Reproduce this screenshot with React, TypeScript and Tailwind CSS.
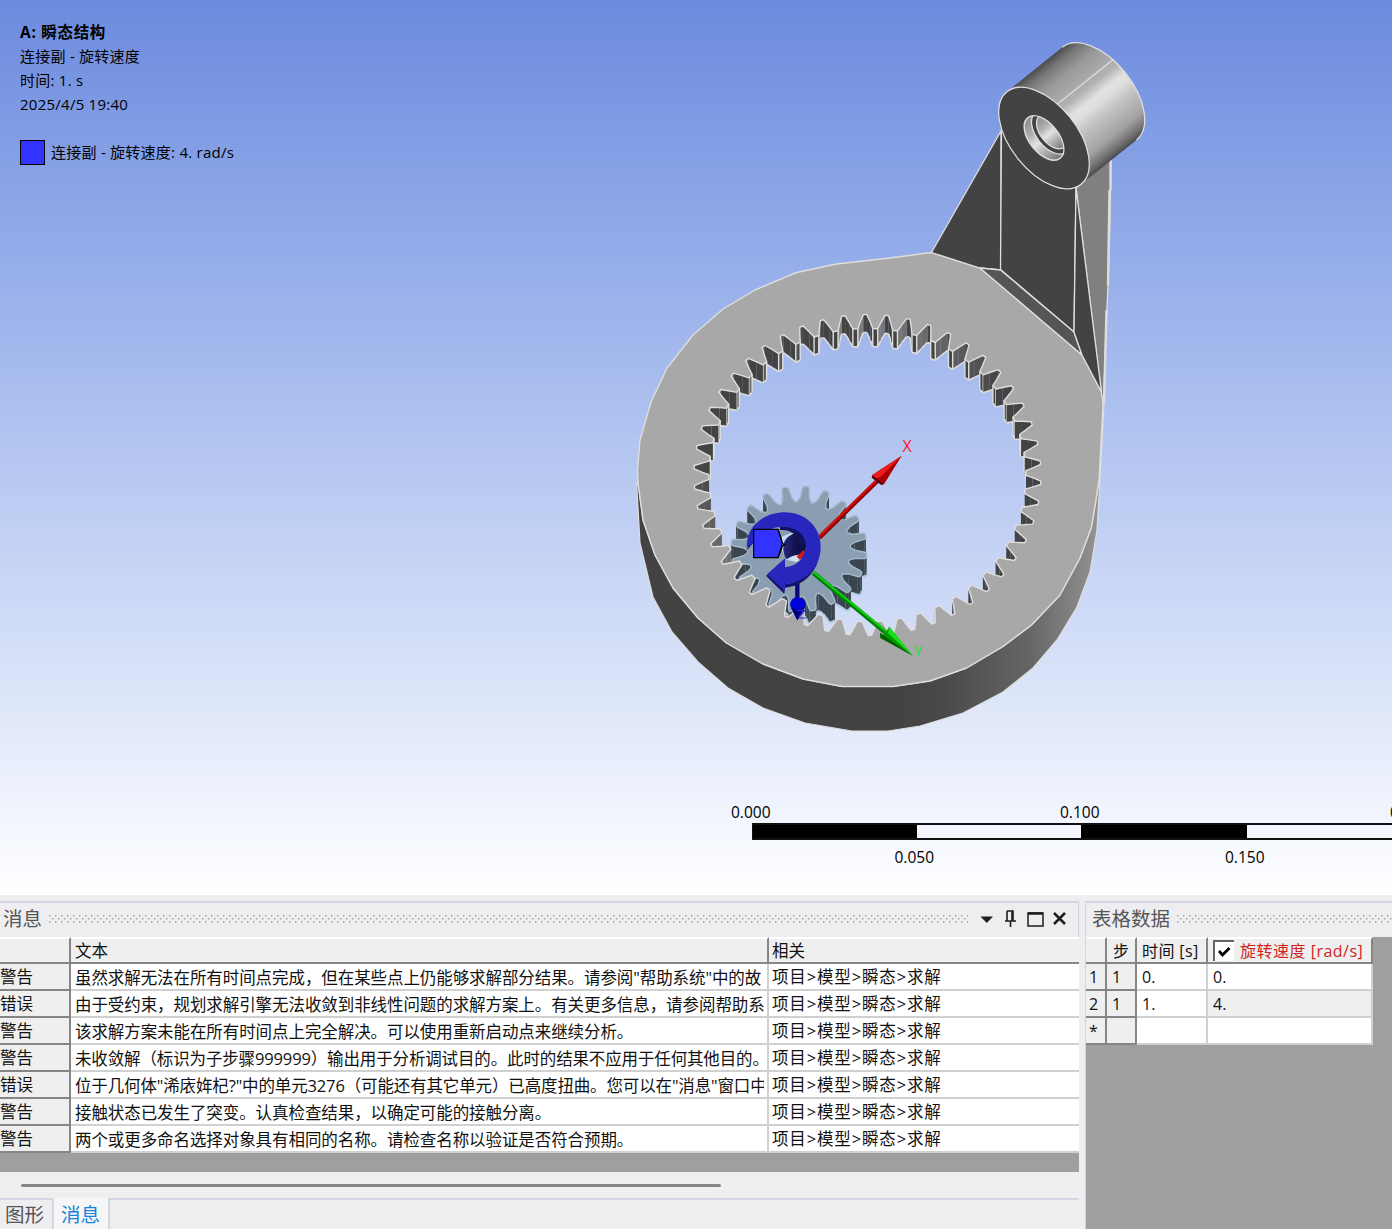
import React from "react";

type Pt = [number, number];

const UI = "font-['Open_Sans','Noto_Sans_CJK_SC',sans-serif]";

const DEPTH = 18;
const SQUASH = 0.925;

const polar = (cx: number, cy: number, r: number, deg: number): Pt => {
  const a = (deg * Math.PI) / 180;
  return [cx + r * Math.sin(a), cy - r * SQUASH * Math.cos(a)];
};

const toPath = (pts: Pt[]) =>
  "M" + pts.map((p) => p[0].toFixed(1) + " " + p[1].toFixed(1)).join("L") + "Z";

// Internal ring gear: 50 gaps, traversed clockwise.
const ringHole: Pt[] = [];
for (let k = 0; k < 50; k++) {
  const t = -0.8 + 7.2 * k;
  const add = (r: number, d: number) => ringHole.push(polar(867.5, 475, r, t + d));
  add(158.5, -2.7);
  add(165, -1.8);
  add(173.5, -0.6);
  add(173.5, 0.6);
  add(165, 1.8);
  add(158.5, 2.7);
}

// Pinion: 20 teeth, traversed clockwise.
const pinion: Pt[] = [];
for (let k = 0; k < 20; k++) {
  const t = 6 + 18 * k;
  const add = (r: number, d: number) => pinion.push(polar(799, 549, r, t + d));
  add(51.5, -7.6);
  add(56, -4.6);
  add(66, -3);
  add(68, -1.8);
  add(68, 1.8);
  add(66, 3);
  add(56, 4.6);
  add(51.5, 7.6);
}

interface Wall {
  a: Pt;
  b: Pt;
  nx: number;
  corner: boolean;
}

const walls = (pts: Pt[], hole: boolean, per: number): Wall[] => {
  const out: Wall[] = [];
  pts.forEach((a, i) => {
    const b = pts[(i + 1) % pts.length];
    const dx = b[0] - a[0];
    const dy = b[1] - a[1];
    if (hole ? dx <= 0.05 : dx >= -0.05) return;
    const len = Math.hypot(dx, dy);
    out.push({ a, b, nx: ((hole ? -1 : 1) * dy) / len, corner: i % per === per - 1 });
  });
  return out.sort((p, q) => p.a[1] + p.b[1] - q.a[1] - q.b[1]);
};

const ringWalls = walls(ringHole, true, 6);
const pinionWalls = walls(pinion, false, 8);

const FACE =
  "M931.5 252.5L980 268L1082 355L1102 393L1103 405L1099 480L1095 506L1091.5 527L1080 558L1060 595L1031.5 625L1003 646.5L966.5 668L930 681L893 686.5L842 686.5L803 679L763 664L726.5 643L698 618L673 588L655 555L643 520L638 483L637.5 470L640 440L651 402L667 368L693 335L723 309L755 290L796.5 272.5L836.5 264L890 258Z";
const RIM =
  "M637 483L637 490L640 543L653 597L672 632L698 662L728 688L763 708L805 723L852 731L888 731L920 726L963 713L1003 692L1033 668L1057 640L1077 607L1090 572L1097 530L1100 480L1104 405L1099 480L1095 506L1091.5 527L1080 558L1060 595L1031.5 625L1003 646.5L966.5 668L930 681L893 686.5L842 686.5L803 679L763 664L726.5 643L698 618L673 588L655 555L643 520L638 483Z";

const EDGE = "#dedede";

function Arm() {
  return (
    <g stroke={EDGE} strokeWidth="1.3" strokeLinejoin="round">
      <path d="M1076 188L1111 158L1110 225L1108 285L1106 330L1103.500 404L1101 390Z" fill="#808080" />
      <path d="M1110.500 160V190M1109.500 190L1108 285M1106.500 310L1104 404" stroke="#dcdcdc" strokeWidth="2.400" fill="none" />
      <path d="M931.500 252.500L1001 131L1001 270L980 268Z" fill="#434343" />
      <path d="M1001.500 128L1076 186L1075 256L1074 332L1000.500 269.500Z" fill="#434343" />
      <path d="M980 268L1000.500 270L1074 332L1082 355Z" fill="#555555" />
      <path d="M1076 188L1101.500 392L1082 355L1074 332Z" fill="#434343" />
    </g>
  );
}

function Boss() {
  return (
    <g transform="translate(1044 138) rotate(51.3)" stroke={EDGE} strokeWidth="1.3">
      <path d="M-59.300 0V-71A59.300 33.300 0 0 1 59.300 -71V0Z" fill="url(#barrel)" stroke="none" />
      <path d="M-59.300 -71A59.300 33.300 0 0 1 59.300 -71" fill="none" />
      <path d="M-18 -31V-103" fill="none" />
      <ellipse rx="59.300" ry="33.300" fill="#434343" />
      <g clipPath="url(#bore)">
        <ellipse rx="26" ry="14.700" fill="url(#boreFill)" />
        <ellipse cy="-8.500" rx="25" ry="14.200" fill="#434343" />
        <ellipse cy="-10.500" rx="20" ry="12" fill="url(#boreFill)" />
      </g>
      <ellipse rx="26" ry="14.700" fill="none" />
    </g>
  );
}

function Triad() {
  return (
    <g transform="translate(690 430) scale(0.33333)">
      <path d="M275 320L325 300L350 330L350 380L320 395L290 390L275 360Z" fill="#c3dbee" />
      <path d="M283 335C295 312 325 302 338 310C352 325 352 360 340 375C320 372 300 380 290 388C278 370 278 352 283 335Z" fill="url(#navy)" />
      <path d="M300 383Q318 373 330 378L320 395Q306 396 300 383Z" fill="#cfe0ee" />
      <path d="M325 385L345 365" stroke="#d01818" strokeWidth="14" />
      <path d="M388 323L565 150" stroke="#8c0000" strokeWidth="13" />
      <path d="M386 320L563 147" stroke="#dc1010" strokeWidth="6" />
      <path d="M635 77L547 135L560 150L582 163Z" fill="#a80000" />
      <path d="M635 77L547 135L556 147L572 140Z" fill="#f01c1c" />
      <path d="M547 135L582 163L574 165L545 143Z" fill="#5c0000" />
      <path d="M322 450V510" stroke="#0a0a78" strokeWidth="13" />
      <path d="M300 525Q303 502 322 502Q345 504 347 525L322 571Z" fill="#0000d8" />
      <path d="M302 532Q322 545 346 530L322 571Z" fill="#00007c" />
      <path d="M320 541H345M325 564H347M345 541L328 560" stroke="#2020f0" strokeWidth="3.500" fill="none" />
      <path d="M370 429L585 606" stroke="#008000" strokeWidth="14" />
      <path d="M370 426L587 603" stroke="#10d010" strokeWidth="6" />
      <path d="M668 677L598 590L590 603L570 622Z" fill="#009a00" />
      <path d="M668 677L598 590L594 610Z" fill="#18e018" />
      <path d="M570 608L668 677L571 624Z" fill="#006000" />
      <path d="M270 290C315 285 352 310 347 345L330 350C332 315 300 298 270 300Z" fill="#101060" />
      <path d="M168 363L192 337V315ZM283 492L228 437L240 430L285 470ZM285 463Q350 455 385 385L380 405Q350 466 285 473Z" fill="#14146c" />
      <path d="M170 352L172 330C180 280 230 247 285 247C345 247 392 290 392 350C392 410 350 455 285 463L284 482L231 433L285 385V412C320 408 347 385 347 345C347 310 315 292 280 290C240 290 200 315 188 342Z" fill="#2727bd" />
      <path d="M191 298H264L277 340L264 383H191Z" fill="#3333ff" stroke="#000" strokeWidth="3.500" />
      <path d="M264 298L272 320L277 340L284 344L277 348L272 365L264 383" fill="none" stroke="#000" strokeWidth="3.500" />
    </g>
  );
}

function Model() {
  return (
    <svg className="absolute inset-0" width="1392" height="895" viewBox="0 0 1392 895">
      <defs>
        <linearGradient id="barrel" gradientUnits="userSpaceOnUse" x1="-59.300" y1="0" x2="59.300" y2="0">
          <stop offset="0" stopColor="#4c4c4c" />
          <stop offset="0.08" stopColor="#777" />
          <stop offset="0.2" stopColor="#9a9a9a" />
          <stop offset="0.4" stopColor="#b2b2b2" />
          <stop offset="0.5" stopColor="#e2e2e2" />
          <stop offset="0.56" stopColor="#dedede" />
          <stop offset="0.66" stopColor="#c4c4c4" />
          <stop offset="0.85" stopColor="#a2a2a2" />
          <stop offset="0.95" stopColor="#6e6e6e" />
          <stop offset="1" stopColor="#4a4a4a" />
        </linearGradient>
        <linearGradient id="boreFill" x1="0" y1="0" x2="1" y2="0">
          <stop offset="0" stopColor="#8c8c8c" />
          <stop offset="0.3" stopColor="#b0b0b0" />
          <stop offset="0.5" stopColor="#e4e4e4" />
          <stop offset="0.7" stopColor="#b4b4b4" />
          <stop offset="1" stopColor="#777" />
        </linearGradient>
        <linearGradient id="rim" gradientUnits="userSpaceOnUse" x1="900" y1="0" x2="1100" y2="0">
          <stop offset="0" stopColor="#434343" />
          <stop offset="0.2" stopColor="#484848" />
          <stop offset="0.65" stopColor="#666" />
          <stop offset="1" stopColor="#949494" />
        </linearGradient>
        <linearGradient id="navy" x1="0" y1="0" x2="1" y2="0">
          <stop offset="0" stopColor="#2a2a80" />
          <stop offset="0.5" stopColor="#12124e" />
          <stop offset="1" stopColor="#0c0c40" />
        </linearGradient>
        <clipPath id="bore">
          <ellipse rx="26" ry="14.700" />
        </clipPath>
      </defs>
      <path d={RIM} fill="url(#rim)" stroke={EDGE} strokeWidth="1.2" strokeLinejoin="round" />
      <g>
        {ringWalls.map(({ a, b, nx, corner }, i) => {
          const s = Math.round(67 + Math.max(0, nx - 0.25) * 85);
          return (
            <g key={i}>
              <path
                d={`M${a[0]} ${a[1]}L${b[0]} ${b[1]}V${b[1] + DEPTH}L${a[0]} ${a[1] + DEPTH}Z`}
                fill={`rgb(${s},${s},${s})`}
              />
              <path d={`M${a[0]} ${a[1] + DEPTH}L${b[0]} ${b[1] + DEPTH}`} stroke={EDGE} strokeWidth="1.6" />
              {corner && (
                <path
                  d={`M${a[0]} ${a[1]}v${DEPTH}M${b[0]} ${b[1]}v${DEPTH}`}
                  stroke={EDGE}
                  strokeWidth="1.4"
                />
              )}
            </g>
          );
        })}
      </g>
      <g>
        {pinionWalls.map(({ a, b }, i) => (
          <g key={i}>
            <path
              d={`M${a[0]} ${a[1]}L${b[0]} ${b[1]}V${b[1] + DEPTH}L${a[0]} ${a[1] + DEPTH}Z`}
              fill="#39444e"
            />
            <path d={`M${a[0]} ${a[1] + DEPTH}L${b[0]} ${b[1] + DEPTH}`} stroke="#b3cee4" strokeWidth="2.200" />
          </g>
        ))}
        <path d={toPath(pinion)} fill="#8b9db0" stroke="#a3b9cc" strokeWidth="1.4" strokeLinejoin="round" />
      </g>
      <path
        d={FACE + toPath(ringHole)}
        fillRule="evenodd"
        fill="#a8a8a8"
        stroke={EDGE}
        strokeWidth="1.4"
        strokeLinejoin="round"
      />
      <Arm />
      <Boss />
      <Triad />
      <text x="902.500" y="452" fill="#ff2020" fontSize="16" fontFamily="Open Sans">X</text>
      <text x="914" y="655.500" fill="#18e818" fontSize="15" fontFamily="Open Sans">Y</text>
    </svg>
  );
}

function ScaleBar() {
  return (
    <div className="absolute left-[731px] top-[802px] w-[661px] overflow-hidden text-[15.500px] leading-5 text-black">
      <div className="flex whitespace-nowrap">
        <span className="w-[329px] shrink-0">0.000</span>
        <span className="w-[330px] shrink-0">0.100</span>
        <span className="shrink-0">0.200</span>
      </div>
      <div className="ml-[21px] mt-px flex h-[17px] border-y-2 border-l border-[#111]">
        <div className="w-[164px] shrink-0 bg-black" />
        <div className="w-[164px] shrink-0" />
        <div className="w-[166px] shrink-0 bg-black" />
        <div className="grow" />
      </div>
      <div className="mt-[7px] flex whitespace-nowrap pl-[163.500px]">
        <span className="w-[330.500px] shrink-0">0.050</span>
        <span>0.150</span>
      </div>
    </div>
  );
}

function Viewport() {
  return (
    <section className="relative h-[895px] shrink-0 overflow-hidden bg-linear-to-b from-[#6c8bde] to-white">
      <Model />
      <div className="relative flex flex-col pl-5 pt-5 text-[15px] leading-6 tracking-[0.25px] text-black">
        <p className="text-[15.500px] font-bold tracking-[0.7px]">A: 瞬态结构</p>
        <p>连接副 - 旋转速度</p>
        <p>时间: 1. s</p>
        <p>2025/4/5 19:40</p>
        <div className="mt-6 flex h-6 items-center gap-[6px] whitespace-nowrap">
          <span className="size-[25px] border border-black bg-[#3333ff]" />
          <span>连接副 - 旋转速度: 4. rad/s</span>
        </div>
      </div>
      <ScaleBar />
    </section>
  );
}

function Grip() {
  return (
    <svg className="h-[9px] min-w-0 flex-1" height="9">
      <defs>
        <pattern id="grip" width="6" height="6" patternUnits="userSpaceOnUse">
          <rect x="0" y="0" width="1.500" height="1.500" fill="#a4a4a4" />
          <rect x="3" y="3" width="1.500" height="1.500" fill="#a4a4a4" />
        </pattern>
      </defs>
      <rect width="100%" height="8" fill="url(#grip)" />
    </svg>
  );
}

const PATH = "项目>模型>瞬态>求解";
const messages: [string, string][] = [
  ["警告", "虽然求解无法在所有时间点完成，但在某些点上仍能够求解部分结果。请参阅\"帮助系统\"中的故"],
  ["错误", "由于受约束，规划求解引擎无法收敛到非线性问题的求解方案上。有关更多信息，请参阅帮助系"],
  ["警告", "该求解方案未能在所有时间点上完全解决。可以使用重新启动点来继续分析。"],
  ["警告", "未收敛解（标识为子步骤999999）输出用于分析调试目的。此时的结果不应用于任何其他目的。"],
  ["错误", "位于几何体\"浠庡姩杞?\"中的单元3276（可能还有其它单元）已高度扭曲。您可以在\"消息\"窗口中"],
  ["警告", "接触状态已发生了突变。认真检查结果，以确定可能的接触分离。"],
  ["警告", "两个或更多命名选择对象具有相同的名称。请检查名称以验证是否符合预期。"],
];

function MessagesPanel() {
  return (
    <section className="flex w-[1079px] shrink-0 flex-col border-t-2 border-[#d3d7e3]">
      <header className="flex h-[34px] shrink-0 items-center border-r border-[#cdd2e2] pb-[2px] pl-[3px] pr-[10px]">
        <h2 className="mr-[7px] text-[19.500px] leading-none text-[#555]">消息</h2>
        <Grip />
        <svg className="ml-3 shrink-0" width="88" height="20" viewBox="0 0 88 20" fill="none" stroke="#1e1e1e">
          <path d="M0.500 7.500H13L6.800 14Z" fill="#1e1e1e" stroke="none" />
          <path d="M27 2V12M27 2H33V12M32 2V12M25 12H36M30.500 12V18" strokeWidth="1.600" />
          <path d="M48 4H63V17H48Z" strokeWidth="1.500" />
          <path d="M48 4.500H63" strokeWidth="2.500" />
          <path d="M74 4L85 15M85 4L74 15" strokeWidth="2.500" />
        </svg>
      </header>
      <div className="grid shrink-0 auto-rows-[27px] grid-cols-[71px_698px_310px] text-[16.500px] leading-none tracking-[-0.08px] text-[#111]">
        <div className="border-b-2 border-r-2 border-[#858585] border-t-2 border-t-white bg-[#efefef]" />
        <div className="flex items-center border-b-2 border-r-2 border-[#858585] border-t-2 border-t-white bg-[#efefef] pl-[4px] pt-px">文本</div>
        <div className="flex items-center border-b-2 border-[#858585] border-t-2 border-t-white bg-[#efefef] pl-[3px] pt-px">相关</div>
        {messages.map(([kind, text], i) => (
          <React.Fragment key={i}>
            <div className="flex items-center border-b-2 border-r-2 border-[#858585] bg-[#efefef] pt-[2px]">{kind}</div>
            <div className="flex items-center border-b-2 border-r-2 border-[#d0d0d0] bg-white pl-[4px] pr-[3px] pt-[2px]">
              <span className={"w-full overflow-hidden whitespace-nowrap leading-[23px] " + (i === 3 || i === 4 ? "tracking-[-0.14px]" : "")}>{text}</span>
            </div>
            <div className="flex items-center border-b-2 border-[#d0d0d0] bg-white pl-[3px] pt-[2px] tracking-[0.85px]">{PATH}</div>
          </React.Fragment>
        ))}
      </div>
      <div className="h-[19px] shrink-0 bg-[#9f9f9f]" />
      <div className="flex h-[26px] shrink-0 items-center bg-[#efefef] pl-[21px]">
        <div className="h-[3px] w-[700px] rounded bg-[#858585]" />
      </div>
      <nav className="flex h-[31px] border-t-2 border-[#d3d7e3] text-[19.500px] leading-none text-[#555]">
        <span className="flex w-[54px] items-center border-r-2 border-[#d3d7e3] pl-[5px]">图形</span>
        <span className="-mt-[2px] flex w-[56px] items-center border-r-2 border-[#d3d7e3] bg-[#f6f6f8] pl-[7px] pt-[2px] text-[#1583d7]">消息</span>
      </nav>
    </section>
  );
}

const headCell = "flex items-center border-b-2 border-r-2 border-[#858585] border-t-2 border-t-white bg-[#efefef]";
const fixedCell = "flex items-center border-b-2 border-r-2 border-[#858585] bg-[#efefef] pt-px";
const cell = "flex items-center border-b-2 border-r-2 border-[#d0d0d0] pl-[5px] pt-px";

function TablePanel() {
  const rows = [
    ["1", "1", "0.", "0."],
    ["2", "1", "1.", "4."],
    ["*", "", "", ""],
  ];
  return (
    <section className="flex min-w-0 flex-1 flex-col border-l border-t-2 border-[#d3d7e3]">
      <header className="flex h-[34px] shrink-0 items-center pb-[2px] pl-[6px]">
        <h2 className="mr-[7px] text-[19.500px] leading-none text-[#555]">表格数据</h2>
        <Grip />
      </header>
      <div className="flex-1 bg-[#9f9f9f]">
        <div className="grid w-[287px] auto-rows-[27px] grid-cols-[21px_30px_71px_165px] text-[16px] leading-none text-[#111]">
          <div className={headCell} />
          <div className={headCell + " justify-center"}>步</div>
          <div className={headCell + " whitespace-nowrap pl-[5px] tracking-[0.4px]"}>时间 [s]</div>
          <div className={headCell + " whitespace-nowrap pl-[5px] tracking-[0.5px] text-[#d01f1f]"}>
            <span className="mr-[6px] flex size-[21px] items-center justify-center border-l-2 border-t-2 border-[#666] bg-white">
              <svg width="14" height="14" viewBox="0 0 14 14" fill="none" stroke="#000" strokeWidth="2.800">
                <path d="M1 6L4.500 10L11.500 3" />
              </svg>
            </span>
            旋转速度 [rad/s]
          </div>
          {rows.map((r, i) => (
            <React.Fragment key={i}>
              <div className={fixedCell + " pl-[3px]"}>{r[0]}</div>
              <div className={fixedCell + " pl-[5px]"}>{r[1]}</div>
              <div className={cell + " bg-white"}>{r[2]}</div>
              <div className={cell + (i === 1 ? " bg-[#efefef]" : " bg-white")}>{r[3]}</div>
            </React.Fragment>
          ))}
        </div>
      </div>
    </section>
  );
}

export default function App() {
  return (
    <main className={"flex h-[1229px] w-[1392px] flex-col overflow-hidden bg-[#eeeef1] " + UI}>
      <Viewport />
      <div className="flex min-h-0 flex-1 gap-[6px] pt-[6px]">
        <MessagesPanel />
        <TablePanel />
      </div>
    </main>
  );
}
